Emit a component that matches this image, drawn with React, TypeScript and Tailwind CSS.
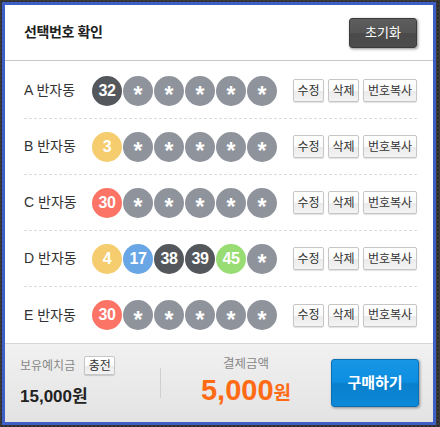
import React from "react";

const rows = [
  { label: "A", balls: [32] },
  { label: "B", balls: [3] },
  { label: "C", balls: [30] },
  { label: "D", balls: [4, 17, 38, 39, 45] },
  { label: "E", balls: [30] },
];

// 로또 번호대별 공 색상
function ballColor(n: number) {
  if (n <= 10) return "bg-[#f5cd6e]";
  if (n <= 20) return "bg-[#69a6e6]";
  if (n <= 30) return "bg-[#fb7465]";
  if (n <= 40) return "bg-[#54575c]";
  return "bg-[#98dd73]";
}

const smallBtn =
  "h-[23px] px-[3px] rounded-[2px] border border-[#c6c6c6] bg-[linear-gradient(to_bottom,#ffffff_0%,#fbfbfb_50%,#ebebeb_52%,#f3f3f3_100%)] text-[12px] leading-none text-[#333] shadow-[0_1px_1px_rgba(0,0,0,0.12)]";

function Ball({ n }: { n?: number }) {
  if (n === undefined) {
    return (
      <div className="flex h-[30px] w-[30px] items-center justify-center rounded-full bg-[#8f949c] text-white">
        <span className="translate-y-[5px] text-[23px] font-bold leading-none">*</span>
      </div>
    );
  }
  return (
    <div
      className={`flex h-[30px] w-[30px] items-center justify-center rounded-full text-[16px] font-bold tracking-[-0.5px] text-white ${ballColor(n)}`}
    >
      {n}
    </div>
  );
}

export default function App() {
  return (
    <div
      className="h-[427px] w-[440px] bg-[#3a3a3a] bg-[radial-gradient(#2b2b2b_1px,transparent_1px)] bg-[size:4px_4px] pt-[2px] pl-[2px] font-['Liberation_Sans','Noto_Sans_CJK_KR',sans-serif]"
    >
      <div className="flex h-[423px] w-[434px] flex-col border-[3px] border-[#3d5fc6] bg-white">
        <div className="flex h-[56px] shrink-0 items-center justify-between border-b border-[#c8c8c8] pl-[19px] pr-[16px]">
          <h1 className="text-[14px] font-bold tracking-[-0.4px] text-[#222]">선택번호 확인</h1>
          <button className="h-[30px] w-[68px] rounded-[3px] border border-[#3b3b3b] bg-[linear-gradient(to_bottom,#5d5d5d_0%,#555_50%,#4a4a4a_52%,#4d4d4d_100%)] text-[13px] text-white shadow-[1px_1px_3px_rgba(0,0,0,0.45)]">
            초기화
          </button>
        </div>

        <div className="flex-1 pt-[2px] pl-[19px] pr-[16px]">
          {rows.map((row, i) => {
            const balls: (number | undefined)[] = [...row.balls];
            while (balls.length < 6) balls.push(undefined);
            return (
              <div
                key={row.label}
                className={`flex h-[56px] items-center ${i < rows.length - 1 ? "border-b border-dashed border-[#dcdcdc]" : ""}`}
              >
                <span className="w-[68px] text-[14px] text-[#333]">{row.label} 반자동</span>
                <div className="flex gap-[1px]">
                  {balls.map((n, j) => (
                    <Ball key={j} n={n} />
                  ))}
                </div>
                <div className="ml-auto flex gap-[4px]">
                  <button className={`${smallBtn} w-[31px]`}>수정</button>
                  <button className={`${smallBtn} w-[31px]`}>삭제</button>
                  <button className={`${smallBtn} w-[54px]`}>번호복사</button>
                </div>
              </div>
            );
          })}
        </div>

        <div className="flex h-[79px] shrink-0 items-center border-t border-[#d6d6d6] bg-[linear-gradient(to_bottom,#f1f1f1,#e3e3e3)] pl-[15px] pr-[14px]">
          <div className="w-[140px]">
            <div className="flex items-center gap-[9px]">
              <span className="text-[12px] text-[#888]">보유예치금</span>
              <button className="h-[19px] w-[31px] rounded-[2px] border border-[#c6c6c6] bg-[linear-gradient(to_bottom,#ffffff_0%,#fbfbfb_50%,#ebebeb_52%,#f3f3f3_100%)] text-[12px] leading-none text-[#333] shadow-[0_1px_1px_rgba(0,0,0,0.15)]">
                충전
              </button>
            </div>
            <div className="mt-[9px] text-[17px] font-bold text-[#222]">15,000원</div>
          </div>
          <div className="h-[30px] w-px bg-[#cfcfcf]" />
          <div className="flex flex-1 -translate-y-[3px] flex-col items-center">
            <span className="text-[12.5px] text-[#888]">결제금액</span>
            <div className="mt-[2px] flex items-baseline font-bold text-[#ff6b14]">
              <span className="text-[29px] leading-none">5,000</span>
              <span className="text-[19px] leading-none">원</span>
            </div>
          </div>
          <button className="h-[48px] w-[88px] rounded-[3px] border border-[#0a6fb5] bg-[linear-gradient(to_bottom,#1896e6_0%,#0c8ee0_48%,#0a7fcc_52%,#0b89d8_100%)] text-[15px] font-bold text-white shadow-[1px_1px_3px_rgba(0,0,0,0.4)]">
            구매하기
          </button>
        </div>
      </div>
    </div>
  );
}
